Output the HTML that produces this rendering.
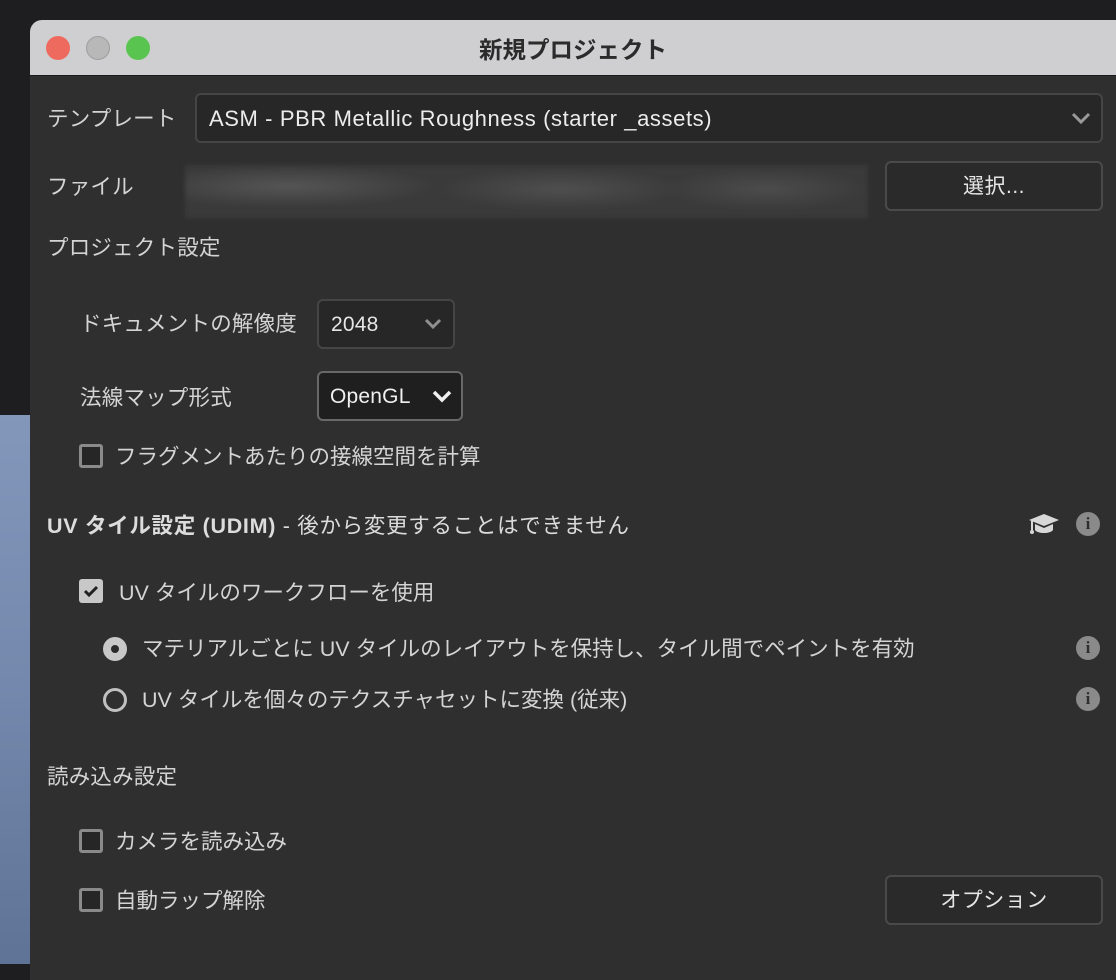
<!DOCTYPE html>
<html><head><meta charset="utf-8"><style>
*{margin:0;padding:0;box-sizing:border-box}
body{width:1116px;height:964px;background:#1e1e20;position:relative;overflow:hidden;font-family:"Liberation Sans","Noto Sans CJK JP",sans-serif;color:#d4d4d4}
.a{position:absolute}
.strip{left:0;top:415px;width:30px;height:549px;background:linear-gradient(180deg,#8397bb 0%,#7488ad 50%,#5f7396 100%)}
.win{left:30px;top:20px;width:1100px;height:960px;background:#2f2f2f;border-radius:12px 0 0 0;overflow:hidden}
.tb{left:0;top:0;width:1100px;height:56px;background:#cfcfd1;border-bottom:1px solid #1a1a1a}
.dot{width:24px;height:24px;border-radius:50%;top:16px}
.t{font-size:21.5px;line-height:26px;white-space:nowrap;letter-spacing:0.2px}
.j{font-size:21.5px;letter-spacing:0}
.dd{background:#272727;border:2px solid #454545;border-radius:6px}
.btn{background:#2a2a2a;border:2px solid #4a4a4a;border-radius:6px;font-size:21px;color:#e6e6e6;text-align:center;line-height:48px;letter-spacing:0.5px}
.cb{width:24px;height:24px;border:3px solid #8a8a8a;border-radius:3px;background:#262626}
.info{width:24px;height:24px;border-radius:50%;background:#8a8a8a;color:#2f2f2f;font:bold 17px/24px "Liberation Serif",serif;text-align:center}
</style></head><body>
<div class="a strip"></div>
<div class="a win">
 <div class="a tb">
  <div class="a dot" style="left:16px;background:#ee6a5e"></div>
  <div class="a dot" style="left:56px;background:#b8b8b8;border:1px solid #9e9e9e"></div>
  <div class="a dot" style="left:96px;background:#5ac451"></div>
  <div class="a" style="left:0;width:1086px;top:11px;text-align:center;font-size:23.5px;font-weight:bold;color:#2b2b2b">新規プロジェクト</div>
 </div>
</div>
<div class="a t" style="left:47px;top:106px">テンプレート</div>
<div class="a dd" style="left:195px;top:93px;width:908px;height:50px"></div>
<div class="a t" style="left:209px;top:106px;font-size:22px;letter-spacing:0.6px;color:#ececec">ASM - PBR Metallic Roughness (starter _assets)</div>
<svg class="a" style="left:1071px;top:111px" width="20" height="14"><path d="M2 3l8 8 8-8" fill="none" stroke="#9a9a9a" stroke-width="3"/></svg>
<div class="a t" style="left:47px;top:174px">ファイル</div>
<div class="a" style="left:185px;top:165px;width:683px;height:53px;background:radial-gradient(ellipse 22% 40% at 15% 40%,#555 0%,transparent 100%),radial-gradient(ellipse 18% 40% at 55% 45%,#4f4f4f 0%,transparent 100%),radial-gradient(ellipse 15% 40% at 85% 45%,#4c4c4c 0%,transparent 100%),#3a3a3a;filter:blur(2px)"></div>
<div class="a btn" style="left:885px;top:161px;width:218px;height:50px">選択...</div>
<div class="a t" style="left:47px;top:235px">プロジェクト設定</div>
<div class="a t" style="left:80px;top:311px">ドキュメントの解像度</div>
<div class="a dd" style="left:317px;top:299px;width:138px;height:50px"></div>
<div class="a t" style="left:331px;top:312px;font-size:21px;color:#e6e6e6">2048</div>
<svg class="a" style="left:424px;top:318px" width="18" height="12"><path d="M2 2l7 7 7-7" fill="none" stroke="#8f8f8f" stroke-width="3"/></svg>
<div class="a t" style="left:80px;top:385px">法線マップ形式</div>
<div class="a" style="left:317px;top:371px;width:146px;height:50px;background:#1f1f1f;border:2px solid #686868;border-radius:6px"></div>
<div class="a t" style="left:330px;top:384px;font-size:21px;color:#f0f0f0">OpenGL</div>
<svg class="a" style="left:432px;top:390px" width="20" height="13"><path d="M2 2l8 8 8-8" fill="none" stroke="#f0f0f0" stroke-width="3.5"/></svg>
<div class="a cb" style="left:79px;top:444px"></div>
<div class="a t j" style="left:115px;top:444px">フラグメントあたりの接線空間を計算</div>
<div class="a t" style="left:47px;top:513px;font-size:21.5px;letter-spacing:0.7px;color:#dcdcdc"><b>UV タイル設定 (UDIM)</b> - 後から変更することはできません</div>
<svg class="a" style="left:1028px;top:512px" width="32" height="24"><path d="M1 8L16 2l15 6-15 6z" fill="#d8d8d8"/><path d="M7 12v6c3 4 15 4 18 0v-6l-9 4z" fill="#d8d8d8"/><path d="M4 9v9" stroke="#d8d8d8" stroke-width="2"/><circle cx="4" cy="20" r="2" fill="#d8d8d8"/></svg>
<div class="a info" style="left:1076px;top:512px">i</div>
<div class="a" style="left:79px;top:579px;width:24px;height:24px;background:#c8c8c8;border-radius:3px"></div>
<svg class="a" style="left:79px;top:579px" width="24" height="24"><path d="M6 12l4 4 8-8" fill="none" stroke="#222" stroke-width="3"/></svg>
<div class="a t j" style="left:119px;top:580px">UV タイルのワークフローを使用</div>
<div class="a" style="left:103px;top:637px;width:24px;height:24px;border-radius:50%;background:#c8c8c8"></div>
<div class="a" style="left:111px;top:645px;width:8px;height:8px;border-radius:50%;background:#2a2a2a"></div>
<div class="a t j" style="left:142px;top:636px">マテリアルごとに UV タイルのレイアウトを保持し、タイル間でペイントを有効</div>
<div class="a info" style="left:1076px;top:636px">i</div>
<div class="a" style="left:103px;top:688px;width:24px;height:24px;border-radius:50%;border:3px solid #c0c0c0"></div>
<div class="a t j" style="left:142px;top:687px">UV タイルを個々のテクスチャセットに変換 (従来)</div>
<div class="a info" style="left:1076px;top:687px">i</div>
<div class="a t" style="left:47px;top:764px">読み込み設定</div>
<div class="a cb" style="left:79px;top:829px"></div>
<div class="a t j" style="left:115px;top:829px">カメラを読み込み</div>
<div class="a cb" style="left:79px;top:888px"></div>
<div class="a t j" style="left:115px;top:888px">自動ラップ解除</div>
<div class="a btn" style="left:885px;top:875px;width:218px;height:50px">オプション</div>
</body></html>
